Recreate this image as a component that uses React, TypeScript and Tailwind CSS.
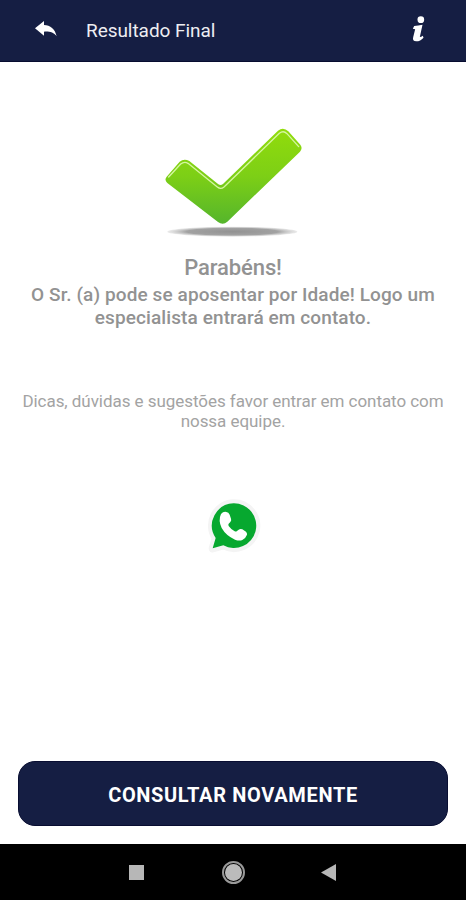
// src/App.tsx
import type { SVGProps } from "react";

function BackIcon(props: SVGProps<SVGSVGElement>) {
  return (
    <svg viewBox="0 0 66 48" fill="currentColor" {...props}>
      <path d="M0 22 L27 0 V12 C46 13 60 23 65 46 C56 34 44 31 27 32 V44 Z" />
    </svg>
  );
}

function InfoIcon(props: SVGProps<SVGSVGElement>) {
  return (
    <svg viewBox="0 0 38 78" fill="currentColor" {...props}>
      <circle cx="26" cy="11" r="10" />
      <path d="M6 30 Q18 29 31 26 L23 63 Q27 63 32 59 L34 65 Q25 76 12 76 Q0 76 3 64 L9 40 L2 38 Z" />
    </svg>
  );
}

function CheckMark(props: SVGProps<SVGSVGElement>) {
  return (
    <svg viewBox="0 0 498 390" {...props}>
      <defs>
        <linearGradient id="green" x1="0" y1="0" x2="0" y2="1">
          <stop offset="0" stopColor="#91dc0b" />
          <stop offset="0.5" stopColor="#7dcf16" />
          <stop offset="1" stopColor="#55b52c" />
        </linearGradient>
        <radialGradient id="shadow">
          <stop offset="0" stopColor="#929292" />
          <stop offset="0.7" stopColor="#a2a2a2" />
          <stop offset="1" stopColor="#ccc" stopOpacity="0.4" />
        </radialGradient>
      </defs>
      <ellipse cx="247" cy="350" rx="195" ry="15" fill="url(#shadow)" />
      <path
        d="M50 185 L89 140 Q102 129 118 138 L205 208 Q212 213 219 207 L384 47 Q400 35 415 49 L451 89 Q459 100 450 110 L232 320 Q219 332 204 321 L52 204 Q42 195 50 185 Z"
        fill="url(#green)"
      />
      <path
        d="M56 186 L92 147 Q103 138 114 145 L202 216 Q212 224 222 216 L388 55 Q400 45 411 56 L446 95"
        fill="none"
        stroke="#d5f6a1"
        strokeWidth="4"
        strokeLinecap="round"
        strokeLinejoin="round"
      />
    </svg>
  );
}

function WhatsAppIcon(props: SVGProps<SVGSVGElement>) {
  return (
    <svg viewBox="0 0 228 210" {...props}>
      <path
        d="M116 40 A67 67 0 1 1 85 166 L53 175 L62 144 A67 67 0 0 1 116 40 Z"
        fill="#f4f4f4"
        stroke="#f4f4f4"
        strokeWidth="24"
        strokeLinejoin="round"
      />
      <path
        d="M116 40 A67 67 0 1 1 85 166 L53 175 L62 144 A67 67 0 0 1 116 40 Z"
        fill="#07a82f"
      />
      <path
        d="M78 72 Q85 64 94 66 Q101 67 104 74 L108 86 Q110 92 106 96 L101 101 Q99 104 101 108 Q108 118 119 124 Q123 126 126 123 L131 119 Q136 115 142 118 L153 125 Q157 129 156 134 Q152 145 142 150 Q133 154 120 149 Q93 137 80 114 Q69 91 78 72 Z"
        fill="#fff"
      />
    </svg>
  );
}

export default function App() {
  return (
    <div className="flex h-[900px] w-[466px] flex-col overflow-hidden bg-white font-[Roboto,sans-serif]">
      {/* Header */}
      <header className="flex h-[62px] shrink-0 items-center border-b border-[#070c30] bg-[#151e43] pl-[35px] pr-[41px] text-white">
        <button aria-label="Voltar" className="mt-[-4px]">
          <BackIcon className="h-4 w-[22px]" />
        </button>
        <h1 className="ml-[29px] text-[19px] leading-6 tracking-[-0.05px] text-[#eeeef2]">
          Resultado Final
        </h1>
        <button aria-label="Informações" className="ml-auto mt-[-4px]">
          <InfoIcon className="h-[26px] w-[13px]" />
        </button>
      </header>

      {/* Resultado */}
      <main className="flex flex-1 flex-col items-center text-center text-[#929292]">
        <CheckMark className="mt-[53px] h-[130px] w-[166px] shrink-0" />
        <h2 className="mt-[11px] text-[22px] font-medium leading-6 tracking-[-0.1px]">Parabéns!</h2>
        <p className="mt-[4px] whitespace-nowrap text-[19px] font-medium leading-[22.5px] tracking-[0.1px]">
          O Sr. (a) pode se aposentar por Idade! Logo um
          <br />
          especialista entrará em contato.
        </p>
        <p className="mt-[62px] whitespace-nowrap text-[17px] leading-5 tracking-[-0.05px] text-[#a3a3a3]">
          Dicas, dúvidas e sugestões favor entrar em contato com
          <br />
          nossa equipe.
        </p>
        <a href="#contato" aria-label="WhatsApp" className="mt-[59px]">
          <WhatsAppIcon className="h-[70px] w-[76px]" />
        </a>
      </main>

      {/* Ação principal */}
      <div className="px-[18px] pb-[18px]">
        <button className="h-[65px] w-full rounded-[17px] border border-[#080d31] bg-[#151e43] pt-[3px] text-[20px] font-bold tracking-[0.65px] text-white">
          CONSULTAR NOVAMENTE
        </button>
      </div>

      {/* Barra do sistema */}
      <nav className="flex h-14 shrink-0 items-center bg-black pl-[129px]">
        <span className="h-[15px] w-[15px] bg-[#b7b7b7]" />
        <span className="ml-[78px] flex h-[23px] w-[23px] items-center justify-center rounded-full border-2 border-[#999]">
          <span className="h-[17px] w-[17px] rounded-full bg-[#bbb]" />
        </span>
        <svg viewBox="0 0 15 17" className="ml-[76px] h-[17px] w-[15px]" fill="#b7b7b7">
          <path d="M0 8.5 L15 0 V17 Z" />
        </svg>
      </nav>
    </div>
  );
}
